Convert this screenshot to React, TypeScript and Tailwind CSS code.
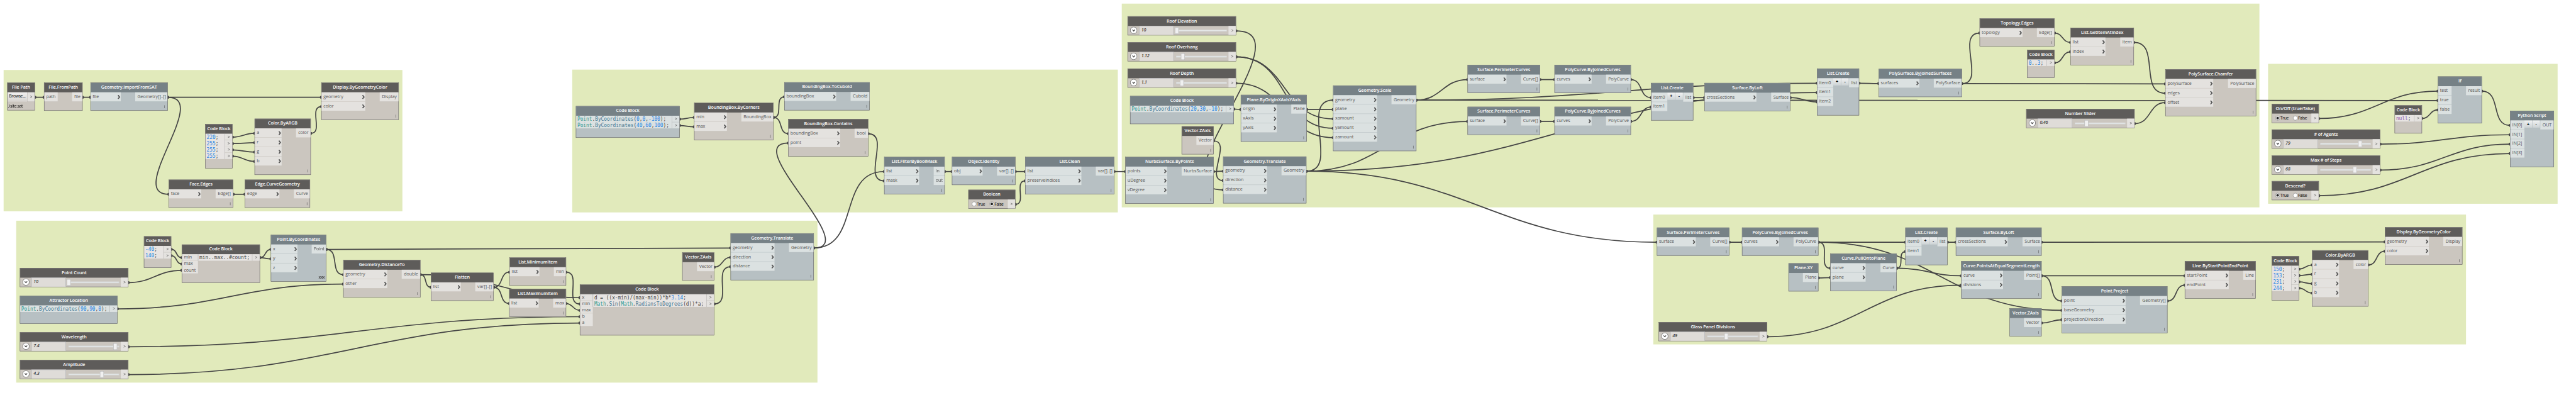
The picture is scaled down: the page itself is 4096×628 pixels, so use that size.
import React from "react";

type Tone = "gray" | "blue";
type Kind = "node" | "code" | "slider" | "bool" | "file";

interface NodeSpec {
  id: string;
  kind: Kind;
  title: string;
  tone: Tone;
  x: number;
  y: number;
  w: number;
  ins?: string[];
  inW?: number;
  outs?: string[];
  outW?: number;
  code?: string[];
  chevrons?: boolean;
  lacing?: string;
  buttons?: boolean;
  value?: string;
  thumb?: number;
  checked?: boolean;
}

const CANVAS_W = 7144;
const CANVAS_H = 1096;
const ZOOM = 4096 / CANVAS_W;

const groups = [
  { x: 10, y: 194, w: 1106, h: 392 },
  { x: 45, y: 612, w: 2222, h: 449 },
  { x: 1587, y: 193, w: 1513, h: 396 },
  { x: 3111, y: 10, w: 3155, h: 565 },
  { x: 6290, y: 177, w: 803, h: 388 },
  { x: 4585, y: 595, w: 2254, h: 360 },
];

const node = (
  id: string,
  tone: Tone,
  title: string,
  x: number,
  y: number,
  w: number,
  ins: string[],
  inW: number,
  outs: string[],
  outW: number,
  extra: Partial<NodeSpec> = {},
): NodeSpec => ({ id, kind: "node", tone, title, x, y, w, ins, inW, outs, outW, chevrons: true, lacing: "|", ...extra });

const code = (
  id: string,
  tone: Tone,
  x: number,
  y: number,
  w: number,
  lines: string[],
  extra: Partial<NodeSpec> = {},
): NodeSpec => ({ id, kind: "code", tone, title: "Code Block", x, y, w, code: lines, outW: 21, ...extra });

const slider = (id: string, title: string, x: number, y: number, value: string, thumb: number): NodeSpec => ({
  id, kind: "slider", tone: "gray", title, x, y, w: 301, value, thumb,
});

const bool = (id: string, title: string, x: number, y: number, checked: boolean): NodeSpec => ({
  id, kind: "bool", tone: "gray", title, x, y, w: 131, checked,
});

const plain = { chevrons: false, lacing: "" };
const listCreate = { chevrons: false, lacing: "", buttons: true };

const nodes: NodeSpec[] = [
  { id: "path", kind: "file", tone: "gray", title: "File Path", x: 20, y: 229, w: 77 },
  node("fromPath", "gray", "File.FromPath", 122, 229, 107, ["path"], 38, ["file"], 29, plain),
  node("sat", "blue", "Geometry.ImportFromSAT", 251, 229, 214, ["file"], 84, ["Geometry[]..[]"], 90),
  node("display1", "gray", "Display.ByGeometryColor", 891, 229, 215, ["geometry", "color"], 122, ["Display"], 53),
  code("cb1", "gray", 569, 344, 76, ["220;", "255;", "255;", "255;"]),
  node("argb1", "gray", "Color.ByARGB", 706, 329, 156, ["a", "r", "g", "b"], 75, ["color"], 41),
  node("faceEdges", "gray", "Face.Edges", 468, 498, 179, ["face"], 90, ["Edge[]"], 49),
  node("edgeCurve", "gray", "Edge.CurveGeometry", 679, 498, 181, ["edge"], 96, ["Curve"], 45),

  code("cb2", "gray", 399, 655, 76, ["-40;", "140;"]),
  code("cb3", "gray", 504, 678, 217, ["min..max..#count;"], { ins: ["min", "max", "count"], inW: 45 }),
  node("point", "blue", "Point.ByCoordinates", 751, 651, 154, ["x", "y", "z"], 74, ["Point"], 41, { lacing: "xxx" }),
  slider("count", "Point Count", 55, 743, "10", 135),
  code("attractor", "blue", 55, 820, 271, ["Point.ByCoordinates(90,90,0);"], { title: "Attractor Location" }),
  slider("wave", "Wavelength", 55, 921, "7.4", 264),
  slider("amp", "Amplitude", 55, 998, "4.3", 227),
  node("dist", "gray", "Geometry.DistanceTo", 952, 721, 214, ["geometry", "other"], 122, ["double"], 52),
  node("flatten", "gray", "Flatten", 1195, 756, 174, ["list"], 83, ["var[]..[]"], 51),
  node("min", "gray", "List.MinimumItem", 1413, 714, 157, ["list"], 83, ["min"], 34),
  node("max", "gray", "List.MaximumItem", 1412, 801, 158, ["list"], 82, ["max"], 36),
  code("cb4", "gray", 1608, 789, 373, ["d = ((x-min)/(max-min))*b*3.14;", "Math.Sin(Math.RadiansToDegrees(d))*a;"], {
    ins: ["x", "min", "max", "b", "a"],
    inW: 36,
  }),
  node("z1", "gray", "Vector.ZAxis", 1892, 700, 89, [], 0, ["Vector"], 48),
  node("translate1", "blue", "Geometry.Translate", 2026, 647, 231, ["geometry", "direction", "distance"], 122, ["Geometry"], 69),

  code("cb5", "blue", 1597, 294, 288, ["Point.ByCoordinates(0,0,-100);", "Point.ByCoordinates(40,60,100);"]),
  node("corners", "gray", "BoundingBox.ByCorners", 1925, 285, 220, ["min", "max"], 91, ["BoundingBox"], 89),
  node("cuboid", "blue", "BoundingBox.ToCuboid", 2175, 228, 237, ["boundingBox"], 144, ["Cuboid"], 53),
  node("contains", "gray", "BoundingBox.Contains", 2186, 330, 222, ["boundingBox", "point"], 144, ["bool"], 38),
  node("filter", "blue", "List.FilterByBoolMask", 2452, 435, 168, ["list", "mask"], 97, ["in", "out"], 31),
  node("identity", "blue", "Object.Identity", 2640, 435, 176, ["obj"], 85, ["var[]..[]"], 51),
  bool("bool1", "Boolean", 2685, 526, false),
  node("clean", "blue", "List.Clean", 2843, 435, 247, ["list", "preserveIndices"], 156, ["var[]..[]"], 51),

  slider("elev", "Roof Elevation", 3127, 45, "10", 136),
  slider("over", "Roof Overhang", 3127, 117, "1.12", 153),
  slider("depth", "Roof Depth", 3127, 190, "1.1", 150),
  code("cb6", "blue", 3134, 266, 288, ["Point.ByCoordinates(20,30,-10);"]),
  node("plane", "blue", "Plane.ByOriginXAxisYAxis", 3441, 263, 183, ["origin", "xAxis", "yAxis"], 100, ["Plane"], 43),
  node("z2", "gray", "Vector.ZAxis", 3277, 350, 89, [], 0, ["Vector"], 48),
  node("nurbs", "blue", "NurbsSurface.ByPoints", 3121, 435, 245, ["points", "uDegree", "vDegree"], 116, ["NurbsSurface"], 89),
  node("translate2", "blue", "Geometry.Translate", 3392, 434, 231, ["geometry", "direction", "distance"], 122, ["Geometry"], 69),
  node("scale", "blue", "Geometry.Scale", 3697, 237, 231, ["geometry", "plane", "xamount", "yamount", "zamount"], 122, ["Geometry"], 69),
  node("perim1", "blue", "Surface.PerimeterCurves", 4070, 180, 201, ["surface"], 108, ["Curve[]"], 53),
  node("perim2", "blue", "Surface.PerimeterCurves", 4070, 296, 201, ["surface"], 108, ["Curve[]"], 53),
  node("poly1", "blue", "PolyCurve.ByJoinedCurves", 4311, 180, 212, ["curves"], 103, ["PolyCurve"], 69),
  node("poly2", "blue", "PolyCurve.ByJoinedCurves", 4311, 296, 212, ["curves"], 103, ["PolyCurve"], 69),
  node("create1", "blue", "List.Create", 4579, 230, 117, ["item0", "item1"], 45, ["list"], 28, listCreate),
  node("loft1", "blue", "Surface.ByLoft", 4727, 230, 238, ["crossSections"], 144, ["Surface"], 53),
  node("create2", "blue", "List.Create", 5039, 190, 117, ["item0", "item1", "item2"], 45, ["list"], 28, listCreate),
  node("joined", "blue", "PolySurface.ByJoinedSurfaces", 5210, 191, 231, ["surfaces"], 113, ["PolySurface"], 78),
  node("topo", "gray", "Topology.Edges", 5490, 51, 208, ["topology"], 119, ["Edge[]"], 49),
  node("getItem", "gray", "List.GetItemAtIndex", 5742, 77, 176, ["list", "index"], 97, ["item"], 38),
  code("cb7", "gray", 5622, 138, 76, ["0..3;"]),
  slider("num", "Number Slider", 5619, 302, "0.46", 167),
  node("chamfer", "gray", "PolySurface.Chamfer", 6005, 192, 252, ["polySurface", "edges", "offset"], 133, ["PolySurface"], 78),

  bool("onoff", "On/Off (true/false)", 6300, 288, true),
  slider("agents", "# of Agents", 6300, 359, "79", 245),
  slider("steps", "Max # of Steps", 6300, 431, "68", 230),
  bool("descend", "Descend?", 6300, 502, true),
  code("cb8", "gray", 6641, 292, 76, ["null;"]),
  node("if", "blue", "If", 6761, 212, 122, ["test", "true", "false"], 38, ["result"], 44, plain),
  node("python", "blue", "Python Script", 6961, 307, 122, ["IN[0]", "IN[1]", "IN[2]", "IN[3]"], 40, ["OUT"], 38, listCreate),

  node("perim3", "blue", "Surface.PerimeterCurves", 4595, 631, 201, ["surface"], 108, ["Curve[]"], 53),
  node("poly3", "blue", "PolyCurve.ByJoinedCurves", 4831, 631, 212, ["curves"], 103, ["PolyCurve"], 69),
  node("xy", "blue", "Plane.XY", 4960, 730, 83, [], 0, ["Plane"], 43),
  node("pull", "blue", "Curve.PullOntoPlane", 5076, 703, 184, ["curve", "plane"], 98, ["Curve"], 45),
  node("create3", "blue", "List.Create", 5284, 631, 117, ["item0", "item1"], 45, ["list"], 28, listCreate),
  slider("glass", "Glass Panel Divisions", 4600, 893, "49", 187),
  node("loft2", "blue", "Surface.ByLoft", 5424, 631, 238, ["crossSections"], 144, ["Surface"], 53),
  node("segs", "blue", "Curve.PointsAtEqualSegmentLength", 5439, 724, 223, ["curve", "divisions"], 116, ["Point[]"], 49),
  node("z3", "blue", "Vector.ZAxis", 5573, 855, 89, [], 0, ["Vector"], 49),
  node("project", "blue", "Point.Project", 5718, 794, 293, ["point", "baseGeometry", "projectionDirection"], 177, ["Geometry[]"], 76),
  node("line", "gray", "Line.ByStartPointEndPoint", 6059, 724, 197, ["startPoint", "endPoint"], 122, ["Line"], 35),
  code("cb9", "gray", 6300, 710, 76, ["150;", "153;", "231;", "244;"]),
  node("argb2", "gray", "Color.ByARGB", 6412, 694, 156, ["a", "r", "g", "b"], 75, ["color"], 41),
  node("display2", "gray", "Display.ByGeometryColor", 6614, 630, 215, ["geometry", "color"], 122, ["Display"], 53),
];

const links: [string, number, string, number][] = [
  ["path", 0, "fromPath", 0],
  ["fromPath", 0, "sat", 0],
  ["sat", 0, "display1", 0],
  ["sat", 0, "faceEdges", 0],
  ["faceEdges", 0, "edgeCurve", 0],
  ["cb1", 0, "argb1", 0],
  ["cb1", 1, "argb1", 1],
  ["cb1", 2, "argb1", 2],
  ["cb1", 3, "argb1", 3],
  ["argb1", 0, "display1", 1],
  ["cb2", 0, "cb3", 0],
  ["cb2", 1, "cb3", 1],
  ["count", 0, "cb3", 2],
  ["cb3", 0, "point", 0],
  ["cb3", 0, "point", 1],
  ["point", 0, "translate1", 0],
  ["point", 0, "dist", 0],
  ["attractor", 0, "dist", 1],
  ["dist", 0, "flatten", 0],
  ["dist", 0, "cb4", 0],
  ["flatten", 0, "min", 0],
  ["flatten", 0, "max", 0],
  ["min", 0, "cb4", 1],
  ["max", 0, "cb4", 2],
  ["wave", 0, "cb4", 3],
  ["amp", 0, "cb4", 4],
  ["z1", 0, "translate1", 1],
  ["cb4", 1, "translate1", 2],
  ["translate1", 0, "contains", 1],
  ["translate1", 0, "filter", 0],
  ["cb5", 0, "corners", 0],
  ["cb5", 1, "corners", 1],
  ["corners", 0, "cuboid", 0],
  ["corners", 0, "contains", 0],
  ["contains", 0, "filter", 1],
  ["filter", 0, "identity", 0],
  ["identity", 0, "clean", 0],
  ["bool1", 0, "clean", 1],
  ["clean", 0, "nurbs", 0],
  ["nurbs", 0, "translate2", 0],
  ["z2", 0, "translate2", 1],
  ["elev", 0, "translate2", 2],
  ["cb6", 0, "plane", 0],
  ["plane", 0, "scale", 1],
  ["over", 0, "scale", 2],
  ["over", 0, "scale", 3],
  ["depth", 0, "scale", 4],
  ["translate2", 0, "scale", 0],
  ["translate2", 0, "perim2", 0],
  ["translate2", 0, "create2", 1],
  ["translate2", 0, "perim3", 0],
  ["scale", 0, "perim1", 0],
  ["scale", 0, "create2", 0],
  ["scale", 0, "if", 1],
  ["perim1", 0, "poly1", 0],
  ["perim2", 0, "poly2", 0],
  ["poly1", 0, "create1", 0],
  ["poly2", 0, "create1", 1],
  ["create1", 0, "loft1", 0],
  ["loft1", 0, "create2", 2],
  ["create2", 0, "joined", 0],
  ["joined", 0, "topo", 0],
  ["joined", 0, "chamfer", 0],
  ["topo", 0, "getItem", 0],
  ["cb7", 0, "getItem", 1],
  ["getItem", 0, "chamfer", 1],
  ["num", 0, "chamfer", 2],
  ["onoff", 0, "if", 0],
  ["cb8", 0, "if", 2],
  ["if", 0, "python", 0],
  ["agents", 0, "python", 1],
  ["steps", 0, "python", 2],
  ["descend", 0, "python", 3],
  ["perim3", 0, "poly3", 0],
  ["poly3", 0, "create3", 0],
  ["poly3", 0, "pull", 0],
  ["poly3", 0, "project", 1],
  ["xy", 0, "pull", 1],
  ["pull", 0, "create3", 1],
  ["pull", 0, "segs", 0],
  ["glass", 0, "segs", 1],
  ["create3", 0, "loft2", 0],
  ["loft2", 0, "display2", 0],
  ["segs", 0, "line", 0],
  ["segs", 0, "project", 0],
  ["z3", 0, "project", 2],
  ["project", 0, "line", 1],
  ["cb9", 0, "argb2", 0],
  ["cb9", 1, "argb2", 1],
  ["cb9", 2, "argb2", 2],
  ["cb9", 3, "argb2", 3],
  ["argb2", 0, "display2", 1],
];

const ROW = 26;
const CODE_ROW = 17.6;

const byId = new Map(nodes.map((n) => [n.id, n]));

const portY = (n: NodeSpec, i: number) => (n.kind === "code" ? n.y + 36.4 + CODE_ROW * i : n.y + 40.7 + ROW * i);

const heightOf = (n: NodeSpec) => {
  if (n.kind === "slider" || n.kind === "bool") return 53;
  if (n.kind === "file") return 77;
  const rows = Math.max(n.ins?.length ?? 0, (n.kind === "code" ? n.code : n.outs)?.length ?? 0);
  return n.kind === "code" ? (rows === 1 ? 78 : 53 + CODE_ROW * rows) : 52 + ROW * rows;
};

const tones = {
  gray: { header: "bg-[#5e5c5a]", body: "bg-[#cbc6bf]", port: "bg-[#e4e2df]", code: "bg-[#e7e4e2]" },
  blue: { header: "bg-[#768186]", body: "bg-[#b7c0c3]", port: "bg-[#dbe1e1]", code: "bg-[#dbe1e1]" },
};

function Wires() {
  return (
    <svg className="absolute left-0 top-0" width={CANVAS_W} height={CANVAS_H} fill="none">
      {links.map(([a, i, b, j]) => {
        const from = byId.get(a)!;
        const to = byId.get(b)!;
        const x0 = from.x + from.w;
        const y0 = portY(from, i);
        const x1 = to.x;
        const y1 = portY(to, j);
        const k = 0.45 * Math.hypot(x1 - x0, y1 - y0);
        return (
          <g key={`${a}${i}${b}${j}`}>
            <path d={`M${x0} ${y0}C${x0 + k} ${y0} ${x1 - k} ${y1} ${x1} ${y1}`} stroke="#454545" strokeWidth="3" />
            <circle cx={x0} cy={y0} r="4" fill="#454545" />
            <circle cx={x1} cy={y1} r="4" fill="#454545" />
          </g>
        );
      })}
    </svg>
  );
}

function Chevron() {
  return (
    <svg className="shrink-0" width="8" height="12" viewBox="0 0 8 12" fill="none">
      <path d="M1.4 1L5.6 6L1.4 11" stroke="#555" strokeWidth="3" />
    </svg>
  );
}

function Arrow({ tone, w, h }: { tone: Tone; w: number; h: number }) {
  return (
    <div className={`flex shrink-0 items-center justify-center ${tones[tone].port}`} style={{ width: w, height: h }}>
      <svg width="7" height="7" viewBox="0 0 7 7" fill="none">
        <path d="M0.8 0.8L6 3.5L0.8 6.2" stroke="#555" strokeWidth="1.1" />
      </svg>
    </div>
  );
}

const TOKEN = /(-?\d+(?:\.\d+)?)|(null)|([A-Z]\w*)(?=\.)|([A-Z]\w*)/g;

function CodeLine({ text }: { text: string }) {
  const parts: React.ReactNode[] = [];
  let last = 0;
  for (const m of text.matchAll(TOKEN)) {
    parts.push(text.slice(last, m.index));
    const cls = m[1] ? "text-[#2585e5]" : m[2] ? "text-[#8f5bab]" : m[3] ? "text-[#2e998f]" : "text-[#417693]";
    parts.push(
      <span key={m.index} className={cls}>
        {m[0]}
      </span>,
    );
    last = m.index! + m[0].length;
  }
  parts.push(text.slice(last));
  return <div className="h-[17.6px] whitespace-pre leading-[18px]">{parts}</div>;
}

function Step({ label }: { label: string }) {
  return (
    <div className="mr-px flex h-5 flex-1 items-center justify-center bg-linear-to-b from-[#f1f2f2] to-[#cdd3d5] text-xs font-bold text-black">
      {label}
    </div>
  );
}

function PortBody({ n }: { n: NodeSpec }) {
  const t = tones[n.tone];
  return (
    <div className="flex items-start text-[12.5px] tracking-[-0.13px] text-[#555]">
      <div className="flex flex-col gap-px" style={{ width: (n.inW ?? 0) > 0 ? n.inW! - 1 : 0 }}>
        {n.ins!.map((p) => (
          <div key={p} className={`flex h-[25px] items-center justify-between pl-[5px] pr-px ${t.port}`}>
            <span className="whitespace-nowrap">{p}</span>
            {n.chevrons && <Chevron />}
          </div>
        ))}
      </div>
      <div className="flex flex-1">
        {n.buttons && (
          <>
            <Step label="+" />
            <Step label="-" />
          </>
        )}
      </div>
      <div className="flex flex-col gap-px" style={{ width: n.outW! - 1 }}>
        {n.outs!.map((p) => (
          <div key={p} className={`flex h-[25px] items-center whitespace-nowrap pl-[6px] ${t.port}`}>
            {p}
          </div>
        ))}
      </div>
    </div>
  );
}

function CodeBody({ n }: { n: NodeSpec }) {
  const t = tones[n.tone];
  return (
    <div className="flex items-start">
      {n.ins && (
        <div className="flex flex-col text-[12.5px] tracking-[-0.13px] text-[#555]" style={{ width: n.inW! - 1 }}>
          {n.ins.map((p, i) => (
            <div
              key={p}
              className={`flex h-[17.6px] items-center whitespace-nowrap pl-[5px] ${t.port} ${i % 2 === 0 && i < n.ins!.length - 1 ? "border-b border-[#cbc6bf]" : ""}`}
            >
              {p}
            </div>
          ))}
        </div>
      )}
      <div
        className={`flex-1 border-r border-[#a9a9a9] pl-[3px] font-['DejaVu_Sans_Mono','Liberation_Mono',monospace] text-[13.65px] text-[#444] ${t.code} ${n.ins ? "border-l" : ""}`}
      >
        {n.code!.map((line, i) => (
          <CodeLine key={i} text={line} />
        ))}
      </div>
      <div className="flex flex-col" style={{ width: n.outW! - 1 }}>
        {n.code!.map((_, i) => (
          <div key={i} className={i % 2 === 0 && i < n.code!.length - 1 ? "border-b border-[#b9b9b5]" : ""}>
            <Arrow tone={n.tone} w={n.outW! - 1} h={i % 2 === 0 && i < n.code!.length - 1 ? 16.6 : 17.6} />
          </div>
        ))}
      </div>
    </div>
  );
}

function SliderBody({ n }: { n: NodeSpec }) {
  return (
    <div className="flex h-[25px] items-stretch">
      <div className="flex w-[31px] items-center justify-center pb-[2px]">
        <svg width="20" height="20" viewBox="0 0 20 20" fill="none">
          <circle cx="10" cy="10" r="9.2" fill="#fff" stroke="#555" strokeWidth="1.2" />
          <path d="M6.6 8.2L10 12L13.4 8.2" stroke="#333" strokeWidth="2" />
        </svg>
      </div>
      <div className="flex w-[96px] items-center border border-b-0 border-[#abadb3] bg-[#dfdcd8] pb-[4px] pl-[5px] text-[12.5px] italic tracking-[-0.3px] text-black">
        {n.value}
      </div>
      <div className="relative flex flex-1 items-center pl-[7px] pr-[5px]">
        <div className="h-[4px] w-full border border-[#d3d6d8] bg-[#e7eaea]" />
        <div
          className="absolute top-[4px] h-[18px] w-[11px] border border-[#acacac] bg-[#f0f0f0]"
          style={{ left: n.thumb! - 133.5 }}
        />
      </div>
      <Arrow tone={n.tone} w={20} h={25} />
    </div>
  );
}

function Radio({ on, label }: { on: boolean; label: string }) {
  return (
    <div className="flex items-center gap-[1px] text-[12px] text-black">
      <div className="flex size-[13px] items-center justify-center rounded-full border border-[#707070] bg-white">
        {on && <div className="size-[7px] rounded-full bg-[#212121]" />}
      </div>
      <span className="tracking-[-0.7px]">{label}</span>
    </div>
  );
}

function BoolBody({ n }: { n: NodeSpec }) {
  return (
    <div className="flex h-[25px] items-center">
      <div className="w-[49px] pl-[9px]">
        <Radio on={n.checked!} label="True" />
      </div>
      <div className="flex-1 pl-[9px]">
        <Radio on={!n.checked} label="False" />
      </div>
      <Arrow tone={n.tone} w={20} h={25} />
    </div>
  );
}

function FileBody({ n }: { n: NodeSpec }) {
  return (
    <div className="text-[12px] tracking-[-0.6px] text-black">
      <div className="flex items-start">
        <div className="flex h-[26px] flex-1 items-center whitespace-nowrap border-r border-[#b5b1ab] bg-linear-to-b from-[#f1f0ef] to-[#d6d3cf] pb-[4px] pl-[4px]">
          Browse...
        </div>
        <Arrow tone={n.tone} w={20} h={25} />
      </div>
      <div className="flex h-[23px] items-center pl-px">.\site.sat</div>
    </div>
  );
}

function GraphNode({ n }: { n: NodeSpec }) {
  const t = tones[n.tone];
  return (
    <div
      className={`absolute flex flex-col border border-[#5e5c5a] ${t.body}`}
      style={{ left: n.x, top: n.y, width: n.w, height: heightOf(n) }}
    >
      <div
        className={`flex h-[26px] shrink-0 items-center justify-center whitespace-nowrap pb-px text-[12.5px] font-semibold tracking-[-0.17px] text-white ${t.header}`}
      >
        {n.title}
      </div>
      {n.kind === "node" && <PortBody n={n} />}
      {n.kind === "code" && <CodeBody n={n} />}
      {n.kind === "slider" && <SliderBody n={n} />}
      {n.kind === "bool" && <BoolBody n={n} />}
      {n.kind === "file" && <FileBody n={n} />}
      {n.lacing === "|" && <div className="mb-[6px] mr-[7px] mt-auto h-[8px] w-[1.5px] self-end bg-[#555]" />}
      {n.lacing === "xxx" && (
        <div className="mb-[4px] mr-[4px] mt-auto self-end text-[11px] font-bold leading-[14px] tracking-[-0.8px] text-[#555]">
          xxx
        </div>
      )}
    </div>
  );
}

export default function App() {
  return (
    <div className="h-[628px] w-[4096px] overflow-hidden bg-white font-['Open_Sans','Noto_Sans',sans-serif]">
      <div
        className="relative h-[1096px] w-[7144px] origin-top-left leading-none"
        style={{ transform: `scale(${ZOOM})` }}
      >
        {groups.map((g) => (
          <div
            key={g.x}
            className="absolute bg-[#e1eabb]"
            style={{ left: g.x, top: g.y, width: g.w, height: g.h }}
          />
        ))}
        <Wires />
        {nodes.map((n) => (
          <GraphNode key={n.id} n={n} />
        ))}
      </div>
    </div>
  );
}
